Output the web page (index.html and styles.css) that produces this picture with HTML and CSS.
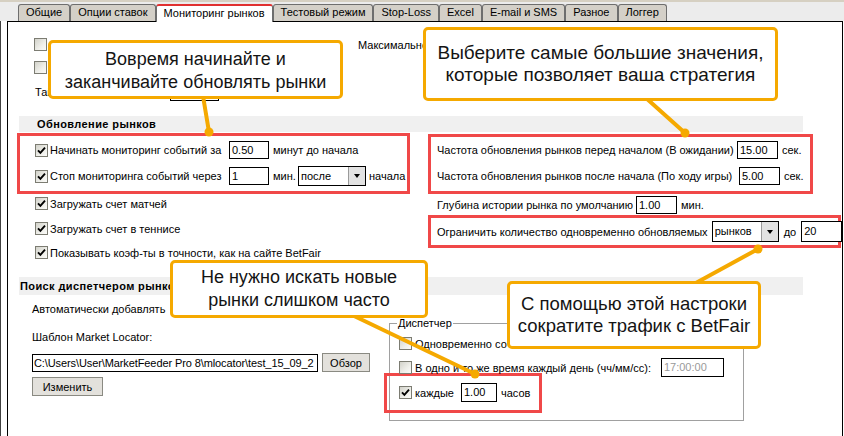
FILE: index.html
```html
<!DOCTYPE html>
<html lang="ru">
<head>
<meta charset="utf-8">
<title>Мониторинг рынков</title>
<link rel="stylesheet" href="styles.css">
</head>
<body>
<div class="window">
  <div class="topband"></div>
  <nav class="tabs">
    <span class="tab">Общие</span>
    <span class="tab">Опции ставок</span>
    <span class="tab active">Мониторинг рынков</span>
    <span class="tab">Тестовый режим</span>
    <span class="tab">Stop-Loss</span>
    <span class="tab">Excel</span>
    <span class="tab">E-mail и SMS</span>
    <span class="tab">Разное</span>
    <span class="tab">Логгер</span>
  </nav>
  <div class="area">
    <div class="panel">
      <div class="top">
        <div class="top-left">
          <div class="trow trow-1"><span class="cb"></span></div>
          <div class="trow trow-2"><span class="cb"></span></div>
          <div class="trow trow-3"><span class="tlabel">Таймаут</span><span class="inp inp-timeout"></span></div>
        </div>
        <div class="top-right">Максимальное</div>
      </div>

      <div class="band band-1">Обновление рынков</div>

      <div class="mid">
        <div class="mid-left">
          <div class="hl hl-start">
            <div class="frow">
              <span class="lbl"><span class="cb on"><svg viewBox="0 0 9 9"><path d="M1 4.3L3.4 6.8L8 1.6"/></svg></span><span>Начинать мониторинг событий за</span></span>
              <span class="inp inp-s">0.50</span>
              <span class="after">минут до начала</span>
            </div>
            <div class="frow frow-2">
              <span class="lbl"><span class="cb on"><svg viewBox="0 0 9 9"><path d="M1 4.3L3.4 6.8L8 1.6"/></svg></span><span>Стоп мониторинга событий через</span></span>
              <span class="inp inp-s">1</span>
              <span class="after unit">мин.</span>
              <span class="sel sel-when"><span class="sel-val">после</span><span class="sel-btn"><i class="tri"></i></span></span>
              <span class="after">начала</span>
            </div>
          </div>
          <div class="cbrow cbrow-1"><span class="cb on"><svg viewBox="0 0 9 9"><path d="M1 4.3L3.4 6.8L8 1.6"/></svg></span><span>Загружать счет матчей</span></div>
          <div class="cbrow cbrow-2"><span class="cb on"><svg viewBox="0 0 9 9"><path d="M1 4.3L3.4 6.8L8 1.6"/></svg></span><span>Загружать счет в теннисе</span></div>
          <div class="cbrow cbrow-3"><span class="cb on"><svg viewBox="0 0 9 9"><path d="M1 4.3L3.4 6.8L8 1.6"/></svg></span><span>Показывать коэф-ты в точности, как на сайте BetFair</span></div>
        </div>

        <div class="mid-right">
          <div class="hl hl-freq">
            <div class="frow">
              <span class="rlbl">Частота обновления рынков перед началом (В ожидании)</span>
              <span class="inp inp-m">15.00</span>
              <span class="after">сек.</span>
            </div>
            <div class="frow frow-2">
              <span class="rlbl rlbl-2">Частота обновления рынков после начала (По ходу игры)</span>
              <span class="inp inp-m">5.00</span>
              <span class="after">сек.</span>
            </div>
          </div>
          <div class="depth">
            <span>Глубина истории рынка по умолчанию</span>
            <span class="inp inp-m">1.00</span>
            <span class="after">мин.</span>
          </div>
          <div class="hl hl-limit">
            <span>Ограничить количество одновременно обновляемых</span>
            <span class="sel sel-kind"><span class="sel-val">рынков</span><span class="sel-btn"><i class="tri"></i></span></span>
            <span class="to">до</span>
            <span class="inp inp-limit">20</span>
          </div>
        </div>
      </div>

      <div class="band band-2">Поиск диспетчером рынков</div>

      <div class="bottom">
        <div class="bottom-left">
          <div class="auto">Автоматически добавлять</div>
          <div class="tpl">Шаблон Market Locator:</div>
          <div class="path-row">
            <span class="inp inp-path">C:\Users\User\MarketFeeder Pro 8\mlocator\test_15_09_2</span>
            <span class="btn btn-browse">Обзор</span>
          </div>
          <span class="btn btn-change">Изменить</span>
        </div>
        <div class="group">
          <div class="group-title">Диспетчер</div>
          <div class="grow grow-1"><span class="cb"></span><span>Одновременно со</span></div>
          <div class="grow grow-2"><span class="cb"></span><span>В одно и то же время каждый день (чч/мм/сс):</span><span class="inp inp-time">17:00:00</span></div>
          <div class="hl hl-every">
            <div class="grow">
              <span class="cb on"><svg viewBox="0 0 9 9"><path d="M1 4.3L3.4 6.8L8 1.6"/></svg></span><span>каждые</span>
              <span class="inp inp-hours">1.00</span>
              <span class="hours">часов</span>
            </div>
          </div>
        </div>
      </div>
    </div>
  </div>

  <svg class="pointers" viewBox="0 0 844 436" width="844" height="436">
    <g stroke="#f5a900" stroke-width="4" stroke-linecap="round">
      <line x1="203" y1="96" x2="209" y2="132"/>
      <line x1="646" y1="98" x2="685" y2="133"/>
      <line x1="352" y1="315" x2="475" y2="374"/>
      <line x1="758" y1="249" x2="694" y2="284"/>
    </g>
    <g fill="#f5a900">
      <circle cx="209" cy="132" r="4.5"/>
      <circle cx="685" cy="133" r="4.5"/>
      <circle cx="475" cy="374" r="4.5"/>
      <circle cx="758" cy="249" r="4.5"/>
    </g>
  </svg>

  <div class="callout c1">Вовремя начинайте и<br>заканчивайте обновлять рынки</div>
  <div class="callout c2">Выберите самые большие значения,<br>которые позволяет ваша стратегия</div>
  <div class="callout c3">Не нужно искать новые<br>рынки слишком часто</div>
  <div class="callout c4">С помощью этой настроки<br>сократите трафик с BetFair</div>
</div>
</body>
</html>
```

FILE: styles.css
```css
html, body {
  margin: 0;
  padding: 0;
}

body {
  font: 11px "Liberation Sans", Arial, sans-serif;
  color: #000;
  background: #ececec;
}

.window {
  position: relative;
  width: 844px;
  height: 436px;
  overflow: hidden;
  background: #ececec;
}

.topband {
  height: 2px;
  background: #d6d0c2;
}

/* Tabs */
.tabs {
  display: flex;
  align-items: flex-end;
  height: 19px;
  padding-left: 18px;
}

.tab {
  box-sizing: border-box;
  height: 17px;
  line-height: 15px;
  padding: 0 7px;
  border: 1px solid #6e6e6e;
  border-bottom: 0;
  border-radius: 3px 3px 0 0;
  background: #d4d0c8;
  white-space: nowrap;
}

.tab.active {
  position: relative;
  z-index: 1;
  height: 18px;
  margin-bottom: -1px;
  line-height: 15px;
  border-top: 2px solid #e03030;
  background: #fff;
}

/* Page body */
.area {
  display: flex;
  height: 415px;
  box-sizing: border-box;
  padding-left: 6px;
  border-left: 1px solid #404040;
  background: #fff;
}

.panel {
  box-sizing: border-box;
  width: 836px;
  border: 1px solid #000;
  border-bottom: 0;
  background: #fff;
}

/* Generic controls */
.cb {
  flex: none;
  display: inline-flex;
  align-items: center;
  justify-content: center;
  box-sizing: border-box;
  width: 13px;
  height: 13px;
  border: 1px solid #7c7c72;
  background: linear-gradient(135deg, #d2d2ca 0%, #efefea 60%, #fbfbf9 100%);
}

.cb svg {
  width: 9px;
  height: 9px;
}

.cb path {
  fill: none;
  stroke: #000;
  stroke-width: 1.9;
}

.inp {
  flex: none;
  display: inline-block;
  box-sizing: border-box;
  height: 18px;
  line-height: 16px;
  padding: 0 2px;
  border: 1px solid #000;
  background: #fff;
  white-space: nowrap;
  overflow: hidden;
}

.sel {
  flex: none;
  display: inline-flex;
  box-sizing: border-box;
  border: 1px solid #000;
  background: #fff;
}

.sel-val {
  flex: 1;
  padding-left: 2px;
}

.sel-btn {
  display: flex;
  align-items: center;
  justify-content: center;
  width: 16px;
  background: #e2e2e2;
  border-left: 1px solid #9a9a9a;
}

.tri {
  width: 0;
  height: 0;
  border-left: 3.5px solid transparent;
  border-right: 3.5px solid transparent;
  border-top: 4px solid #000;
}

.btn {
  display: inline-flex;
  align-items: center;
  justify-content: center;
  box-sizing: border-box;
  height: 19px;
  border: 1px solid #8a8a82;
  background: #e3e1dc;
}

.hl {
  box-sizing: border-box;
  border: 3px solid #f04848;
}

/* Top area */
.top {
  display: flex;
  height: 94px;
}

.top-left {
  box-sizing: border-box;
  width: 350px;
  padding-left: 26px;
}

.trow {
  display: flex;
  align-items: center;
  gap: 3px;
  height: 13px;
}

.trow-1 { margin-top: 16px; }
.trow-2 { margin-top: 10px; }

.trow-3 {
  height: 18px;
  margin-top: 9px;
  gap: 0;
}

.tlabel {
  width: 135px;
  padding-left: 1px;
}

.inp-timeout {
  width: 49px;
}

.top-right {
  padding-top: 16px;
  line-height: 14px;
}

/* Section bands */
.band {
  box-sizing: border-box;
  width: 784px;
  margin-left: 11px;
  background: #f0f0f0;
  font-weight: bold;
  letter-spacing: 0.4px;
}

.band-1 {
  height: 16px;
  line-height: 16px;
  padding-left: 18px;
}

.band-2 {
  height: 18px;
  line-height: 18px;
  padding-left: 1px;
}

/* Middle area */
.mid {
  display: flex;
  height: 145px;
}

.mid-left {
  width: 393px;
  margin-left: 9px;
}

.hl-start {
  height: 61px;
  margin-top: 1px;
  padding: 5px 0 0 15px;
}

.frow {
  display: flex;
  align-items: center;
  height: 18px;
}

.frow-2 {
  margin-top: 8px;
}

.lbl {
  display: flex;
  align-items: center;
  gap: 2px;
  width: 194px;
  white-space: nowrap;
}

.inp-s {
  width: 40px;
}

.after {
  margin-left: 4px;
  white-space: nowrap;
}

.unit {
  width: 22px;
}

.sel-when {
  width: 68px;
  height: 20px;
  margin-left: 3px;
  line-height: 18px;
}

.sel-when + .after {
  margin-left: 3px;
}

.cbrow {
  display: flex;
  align-items: center;
  gap: 2px;
  height: 13px;
  padding-left: 18px;
  white-space: nowrap;
}

.cbrow-1 { margin-top: 3px; }
.cbrow-2 { margin-top: 12px; }
.cbrow-3 { margin-top: 11px; }

.mid-right {
  width: 413px;
  margin-left: 18px;
}

.hl-freq {
  width: 385px;
  height: 60px;
  margin-top: 2px;
  padding: 4px 0 0 6px;
}

.rlbl {
  width: 300px;
  white-space: nowrap;
}

.rlbl-2 {
  width: 302px;
}

.inp-m {
  width: 41px;
}

.depth {
  display: flex;
  align-items: center;
  height: 18px;
  margin-top: 2px;
  padding-left: 9px;
  white-space: nowrap;
}

.depth .inp {
  margin-left: 3px;
}

.hl-limit {
  display: flex;
  align-items: center;
  height: 33px;
  margin-top: 1px;
  padding-left: 6px;
  white-space: nowrap;
}

.sel-kind {
  width: 67px;
  height: 21px;
  margin-left: 4px;
  line-height: 19px;
}

.to {
  margin-left: 5px;
}

.inp-limit {
  width: 41px;
  height: 21px;
  line-height: 19px;
  margin-left: 5px;
}

/* Bottom area */
.bottom {
  display: flex;
}

.bottom-left {
  box-sizing: border-box;
  width: 381px;
  padding-left: 24px;
}

.auto {
  margin-top: 7px;
  line-height: 14px;
  white-space: nowrap;
}

.tpl {
  margin-top: 14px;
  line-height: 14px;
}

.path-row {
  display: flex;
  align-items: center;
  gap: 4px;
  height: 19px;
  margin-top: 9px;
}

.inp-path {
  width: 286px;
  padding: 0 1px;
  letter-spacing: -0.1px;
}

.btn-browse {
  width: 48px;
}

.btn-change {
  width: 71px;
  margin-top: 5px;
}

.group {
  box-sizing: border-box;
  width: 355px;
  height: 98px;
  margin-top: 28px;
  padding-left: 9px;
  border: 1px solid #a0a0a0;
}

.group-title {
  width: max-content;
  margin: -7px 0 0 -2px;
  padding: 0 1px;
  line-height: 13px;
  background: #fff;
}

.grow {
  display: flex;
  align-items: center;
  gap: 3px;
  white-space: nowrap;
}

.grow-1 {
  height: 13px;
  margin-top: 7px;
}

.grow-2 {
  height: 19px;
  margin-top: 8px;
}

.inp-time {
  width: 63px;
  height: 19px;
  margin-left: 7px;
  color: #9a9a9a;
}

.hl-every {
  width: 158px;
  height: 40px;
  margin: -4px 0 0 -15px;
  padding: 7px 0 0 12px;
}

.hl-every .grow {
  height: 19px;
}

.inp-hours {
  width: 36px;
  height: 19px;
  margin-left: 4px;
}

.hours {
  margin-left: 1px;
}

/* Annotations */
.pointers {
  position: absolute;
  left: 0;
  top: 0;
  z-index: 2;
  pointer-events: none;
}

.callout {
  position: absolute;
  z-index: 3;
  display: flex;
  align-items: center;
  justify-content: center;
  box-sizing: border-box;
  border: 3px solid #f5a900;
  border-radius: 5px;
  background: #fff;
  color: #141414;
  font: 18px "Liberation Sans", Arial, sans-serif;
  line-height: 22px;
  text-align: center;
  white-space: nowrap;
}

.c1 { left: 48px; top: 40px; width: 295px; height: 59px; line-height: 23px; padding-top: 2px; }
.c2 { left: 423px; top: 27px; width: 355px; height: 74px; font-size: 19px; }
.c3 { left: 170px; top: 260px; width: 258px; height: 58px; line-height: 23px; }
.c4 { left: 507px; top: 281px; width: 254px; height: 68px; font-size: 18.5px; }
```
